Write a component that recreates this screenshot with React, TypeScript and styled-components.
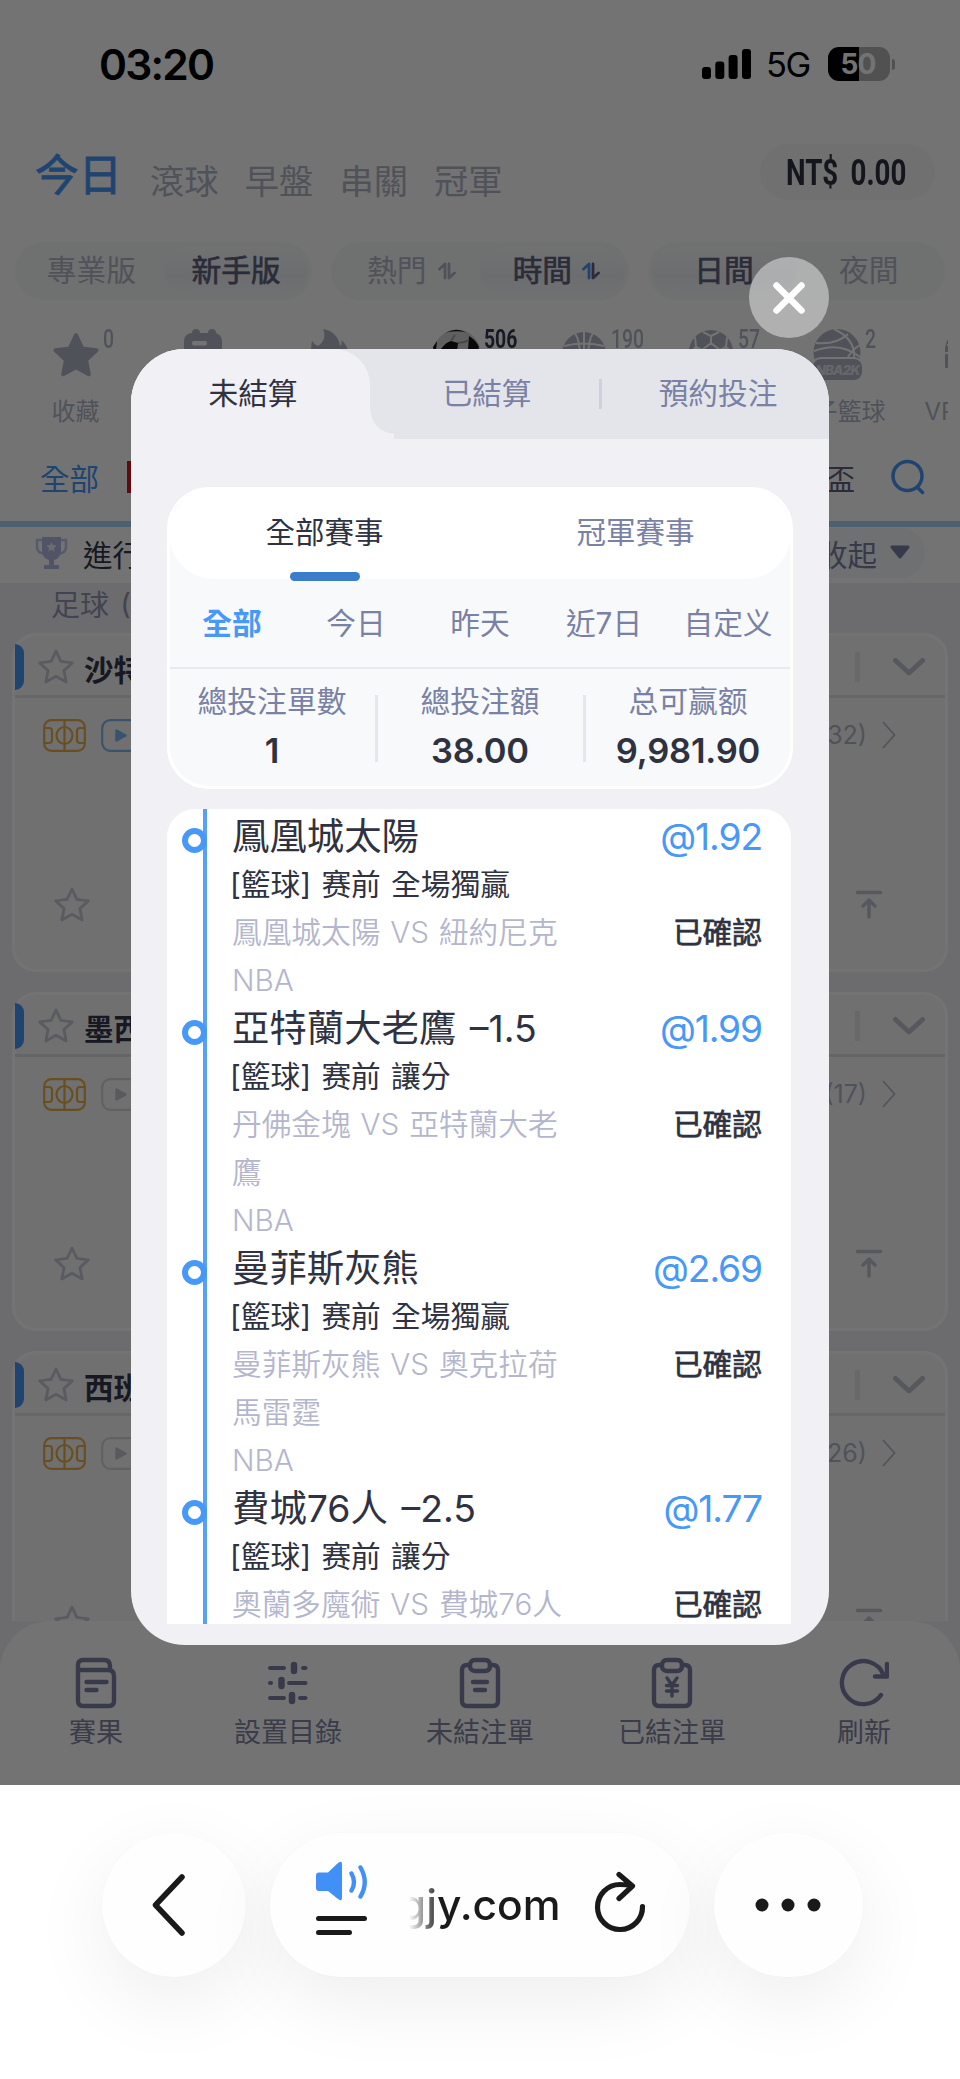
import React from "react";
import styled, { createGlobalStyle } from "styled-components";

const GlobalStyle = createGlobalStyle`
  *, *::before, *::after { box-sizing: border-box; }
  body {
    margin: 0;
    background: #fff;
    font-family: Inter, "Noto Sans CJK TC", sans-serif;
    color: #2f3241;
  }
  svg { display: block; flex: none; }
`;

const Screen = styled.div`
  width: 960px;
  height: 2079px;
  overflow: hidden;
  position: relative;
  display: flex;
  flex-direction: column;
  white-space: nowrap;
`;

const Page = styled.div`
  position: relative;
  height: 1785px;
  background: #fff;
  overflow: hidden;
  display: flex;
  flex-direction: column;
`;

const Scrim = styled.div`
  position: absolute;
  inset: 0;
  background: rgba(0, 0, 0, 0.55);
`;

/* ---------- status bar ---------- */

const StatusBar = styled.div`
  height: 128px;
  display: flex;
  align-items: center;
  padding: 0 65px 0 99px;
  color: #000;
`;

const Clock = styled.div`
  flex: 1;
  font-size: 42.5px;
  font-weight: 600;
  letter-spacing: -1.8px;
`;

const Network = styled.div`
  font-size: 34.5px;
  width: 45px;
  margin: 1px 17px 0 15px;
  letter-spacing: -1.5px;
`;

const Battery = styled.div`
  width: 62px;
  height: 34px;
  border-radius: 11px;
  display: flex;
  align-items: center;
  justify-content: center;
  font-size: 28px;
  font-weight: 700;
  color: #fff;
  letter-spacing: -0.8px;
  padding-right: 2px;
  background: linear-gradient(90deg, #000 31px, #b4b4b4 31px);
`;

const BatteryNub = styled.div`
  width: 3px;
  height: 11px;
  margin-left: 2px;
  border-radius: 0 4px 4px 0;
  background: #b4b4b4;
`;

/* ---------- header ---------- */

const NavRow = styled.div`
  height: 114px;
  display: flex;
  align-items: flex-start;
  padding: 16px 25px 0 35px;
`;

const NavTab = styled.div<{ $active?: boolean }>`
  width: ${(p) => (p.$active ? 115 : 94.7)}px;
  font-size: ${(p) => (p.$active ? 43.5 : 34.3)}px;
  -webkit-text-stroke: ${(p) => (p.$active ? "1px #4898f8" : "0")};
  color: ${(p) => (p.$active ? "#4898f8" : "#b1b7c8")};
  line-height: 60px;
  margin-top: ${(p) => (p.$active ? 1 : 8)}px;
`;

const Balance = styled.div`
  margin-left: auto;
  width: 175px;
  height: 56px;
  border-radius: 28px;
  background: #f8f8fa;
  display: flex;
  align-items: center;
  justify-content: center;
  padding: 2px 2px 0 0;
  color: #2f3241;
`;

const Condensed = styled.span<{ $size: number; $bold?: boolean }>`
  font-family: Roboto, sans-serif;
  font-size: ${(p) => p.$size}px;
  font-weight: ${(p) => (p.$bold ? 700 : 500)};
  line-height: 1;
  word-spacing: -1px;
  transform: scaleX(0.76);
  transform-origin: ${(p) => (p.$size > 30 ? "center" : "left")};
`;

const Segments = styled.div`
  height: 58px;
  display: flex;
  gap: 19px;
  padding: 0 15px;
`;

const Segment = styled.div`
  flex: 1;
  border-radius: 29px;
  background: #f7f8f9;
  padding: 5px 4px;
  display: flex;
`;

const SegItem = styled.div<{ $active?: boolean; $sortable?: boolean }>`
  flex: 1;
  display: flex;
  align-items: center;
  justify-content: center;
  gap: ${(p) => (p.$active ? 10 : 12)}px;
  padding: 0 0 6px ${(p) => (p.$sortable ? 8 : 0)}px;
  border-radius: 24px;
  font-size: 29.7px;
  -webkit-text-stroke: ${(p) => (p.$active ? "0.7px #5f6380" : "0")};
  color: ${(p) => (p.$active ? "#5f6380" : "#b1b7c8")};
  background: ${(p) =>
    p.$active ? "linear-gradient(#fbfbfc, #f5f7fa 35%, #edf1f6 60%, #f9fafb)" : "none"};

  svg {
    margin-top: 5px;
  }
`;

const SportsRow = styled.div`
  height: 136px;
  width: 936px;
  margin-left: 12px;
  padding-top: 29px;
  display: flex;
  overflow: hidden;
`;

const Sport = styled.div`
  position: relative;
  flex: none;
  width: 127px;
  display: flex;
  flex-direction: column;
  align-items: center;
  color: #b1b7c8;
`;

const SportIcon = styled.div`
  height: 55px;
  flex: none;
  display: flex;
  align-items: flex-start;
`;

const SportLabel = styled.div`
  font-size: 24px;
  line-height: 56px;
`;

const SportCount = styled.div<{ $dark?: boolean }>`
  position: absolute;
  left: 91px;
  top: -2px;
  color: ${(p) => (p.$dark ? "#333a50" : "#b1b7c8")};
`;

const LeagueRow = styled.div`
  height: 91px;
  border-bottom: 6px solid #a8d5f9;
  display: flex;
  align-items: center;
  padding: 0 35px 3px 40px;
  font-size: 29.5px;
  color: #5f6380;
`;

const LeagueAll = styled.span`
  color: #4898f8;
  width: 87px;
`;

const LeagueBadge = styled.span`
  width: 70px;
  height: 32px;
  background: #d8141f;
`;

const LeagueCup = styled.span`
  margin-left: auto;
  margin-right: 36px;
`;

const LiveRow = styled.div`
  height: 56px;
  display: flex;
  align-items: center;
  padding: 0 35px 5px;
  font-size: 29.5px;
  color: #33364a;
`;

const LiveTitle = styled.span`
  margin-left: 15px;
`;

const Collapse = styled.div`
  margin-left: auto;
  width: 134px;
  height: 50px;
  border-radius: 25px;
  background: #f7f8fa;
  display: flex;
  align-items: center;
  justify-content: flex-end;
  gap: 13px;
  padding-right: 15px;
  color: #7981a4;
`;

const Matches = styled.div`
  height: 1038px;
  overflow: hidden;
  background: #f0f0f5;
  padding: 0 12px;
`;

const SportHeading = styled.div`
  height: 50px;
  line-height: 46px;
  padding-left: 39px;
  font-size: 29px;
  word-spacing: 3px;
  color: #9297b3;
`;

const MatchCard = styled.div`
  height: 339px;
  margin-bottom: 20px;
  border: 3px solid #fff;
  border-radius: 24px;
  background: #f9f9fa;
`;

const MatchHead = styled.div<{ $line: string }>`
  height: 62px;
  border-bottom: 3px solid ${(p) => p.$line};
  display: flex;
  align-items: center;
  padding: 3px 20px 0 0;
  font-size: 29.5px;
  font-weight: 700;
  color: #33364a;
`;

const Marker = styled.span`
  width: 9px;
  height: 46px;
  margin-right: 13px;
  border-radius: 0 9px 9px 0;
  background: #4898f8;
`;

const MatchTitle = styled.span`
  margin: 2px 0 0 9px;
`;

const HeadDot = styled.span`
  width: 3px;
  height: 3px;
  margin: -22px 26px 0 auto;
  background: #b1b7c8;
`;

const HeadDivider = styled.span`
  width: 5px;
  height: 30px;
  margin-right: 31px;
  background: #e6e7ea;
`;

const MatchInfo = styled.div`
  height: 74px;
  display: flex;
  align-items: center;
  gap: 15px;
  padding: 0 49px 0 28px;
  color: #b1b7c8;
`;

const MatchCount = styled.span`
  margin-left: auto;
  font-size: 25px;
`;

const MatchFoot = styled.div`
  display: flex;
  justify-content: space-between;
  align-items: center;
  padding: 114px 62px 0 38px;
`;

const BottomNav = styled.div`
  height: 164px;
  background: #f0f0f5;
`;

const BottomNavInner = styled.div`
  height: 164px;
  border-radius: 50px 50px 0 0;
  background: #fff;
  display: flex;
  padding-top: 34px;
`;

const NavItem = styled.div`
  flex: 1;
  display: flex;
  flex-direction: column;
  align-items: center;
  gap: 3px;
  color: #8085a4;
  font-size: 27px;
  line-height: 42px;
`;

/* ---------- bet slip dialog ---------- */

const Dialog = styled.div`
  position: absolute;
  left: 131px;
  top: 349px;
  width: 698px;
  height: 1296px;
  border-radius: 54px;
  overflow: hidden;
  background: #f0f0f5;
  display: flex;
  flex-direction: column;
  padding-bottom: 21px;
`;

const DialogTabs = styled.div`
  height: 90px;
  flex: none;
  margin-bottom: 48px;
  background: #e4e5ea;
  display: grid;
  grid-template-columns: 239px 229px 3px 227px;
  align-items: center;
`;

const DialogTab = styled.div<{ $active?: boolean }>`
  position: relative;
  height: 90px;
  line-height: ${(p) => (p.$active ? 89 : 88)}px;
  text-align: center;
  font-size: 29.7px;
  padding-left: 5px;
  color: ${(p) => (p.$active ? "#2f3241" : "#7981a4")};
  background: ${(p) => (p.$active ? "#f0f0f5" : "none")};
  border-radius: ${(p) => (p.$active ? "0 36px 0 0" : "0")};

  &::after {
    content: "";
    display: ${(p) => (p.$active ? "block" : "none")};
    position: absolute;
    left: 100%;
    bottom: 0;
    width: 24px;
    height: 29px;
    border-bottom: 5px solid #f0f0f5;
    background: radial-gradient(circle at 24px 0, transparent 23px, #f0f0f5 24px);
  }
`;

const TabDivider = styled.div`
  height: 30px;
  background: #cdd0dd;
`;

const Summary = styled.div`
  flex: none;
  width: 626px;
  height: 302px;
  margin-left: 36px;
  border: 3px solid #fff;
  border-radius: 42px;
  background: #f8f9fb;
  display: flex;
  flex-direction: column;
`;

const ScopeTabs = styled.div`
  height: 91px;
  margin: -2px -1px 0;
  flex: none;
  border-radius: 46px;
  background: #fff;
  display: flex;
`;

const ScopeTab = styled.div<{ $active?: boolean }>`
  position: relative;
  flex: 1;
  text-align: center;
  line-height: 89px;
  font-size: 29.5px;
  color: ${(p) => (p.$active ? "#2f3241" : "#7981a4")};

  &::after {
    content: "";
    display: ${(p) => (p.$active ? "block" : "none")};
    position: absolute;
    left: 50%;
    bottom: -2px;
    width: 70px;
    height: 9px;
    margin-left: -35px;
    border-radius: 4.5px;
    background: #3a7dcb;
  }
`;

const Filters = styled.div`
  display: flex;
  height: 90px;
  border-bottom: 2px solid #e9eaee;
`;

const Filter = styled.div<{ $active?: boolean }>`
  flex: 1;
  text-align: center;
  line-height: 88px;
  font-size: 29.7px;
  font-weight: ${(p) => (p.$active ? 700 : 400)};
  color: ${(p) => (p.$active ? "#4898f8" : "#7981a4")};
`;

const Stats = styled.div`
  flex: 1;
  display: flex;
  margin: 0 -2px;
`;

const Stat = styled.div`
  position: relative;
  flex: 1;
  text-align: center;
  padding-top: 9px;

  & + &::before {
    content: "";
    position: absolute;
    left: -1px;
    top: 26px;
    width: 3px;
    height: 67px;
    background: #e6e7ee;
  }
`;

const StatLabel = styled.div`
  font-size: 29.8px;
  line-height: 46px;
  color: #7981a4;
`;

const StatValue = styled.div`
  font-size: 34.5px;
  font-weight: 600;
  letter-spacing: -0.2px;
  line-height: 53px;
`;

const Bets = styled.div`
  position: relative;
  flex: 1;
  width: 624px;
  margin: 20px 0 0 36px;
  padding-top: 3px;
  border-radius: 28px 28px 0 0;
  background: #fff;
  overflow: hidden;

  &::before {
    content: "";
    position: absolute;
    left: 36px;
    top: 0;
    bottom: 0;
    width: 4px;
    background: #55a0f8;
  }
`;

const Bet = styled.div`
  position: relative;
  padding: 0 29px 0 65px;

  &::before {
    content: "";
    position: absolute;
    left: 15px;
    top: 16px;
    width: 25px;
    height: 25px;
    border: 6px solid #4898f8;
    border-radius: 50%;
    background: #fff;
  }
`;

const BetLine = styled.div`
  display: flex;
  justify-content: space-between;
  font-size: 29.7px;
  line-height: 48px;
  word-spacing: 1.5px;
`;

const BetTitle = styled(BetLine)`
  font-size: 37.4px;
  line-height: 50px;
  margin-bottom: -2px;
  word-spacing: 3px;
`;

const BetMarket = styled(BetLine)`
  margin-left: -2px;
  word-spacing: 2px;
`;

const Odds = styled.span`
  color: #4898f8;
  font-size: 37.2px;
  letter-spacing: -1.1px;
`;

const Muted = styled.span`
  color: #b3b6cc;
  font-weight: 350;
  white-space: pre-line;
`;

const BetState = styled.span`
  -webkit-text-stroke: 0.7px #2f3241;
`;

const CloseButton = styled.div`
  position: absolute;
  left: 749px;
  top: 257px;
  width: 80px;
  height: 81px;
  border-radius: 50%;
  background: rgba(255, 255, 255, 0.44);
  display: flex;
  align-items: center;
  justify-content: center;
`;

/* ---------- browser toolbar ---------- */

const Browser = styled.div`
  height: 294px;
  padding: 48px 97px 0 102px;
  display: flex;
  align-items: flex-start;
  gap: 24px;
  color: #1a1a1a;
  background: #fff;
  overflow: hidden;
`;

const Bubble = styled.div<{ $width: number; $shift?: number }>`
  width: ${(p) => p.$width}px;
  height: 144px;
  flex: none;
  border-radius: 72px;
  background: #fefefe;
  box-shadow: 0 24px 80px rgba(0, 0, 0, 0.07), 0 0 2px rgba(0, 0, 0, 0.03);
  display: flex;
  align-items: center;
  justify-content: center;
  padding-right: ${(p) => p.$shift ?? 0}px;
`;

const SoundMenu = styled.div`
  margin-bottom: 12px;
`;

const Reload = styled.div`
  margin-bottom: 6px;
`;

const Address = styled.div`
  width: 152px;
  margin: 0 33px 0 41px;
  display: flex;
  justify-content: flex-end;
  overflow: hidden;
  font-size: 42.5px;
  font-weight: 500;
  letter-spacing: 0;
  line-height: 64px;
  mask-image: linear-gradient(90deg, transparent, #000 31px);
`;

/* ---------- icons ---------- */

const Star = ({ solid }: { solid?: boolean }) => (
  <svg width={solid ? 48 : 38} height={solid ? 50 : 38} viewBox={solid ? "0 -0.7 24 24" : "0 0 24 24"} fill={solid ? "#b1b7c8" : "none"} stroke={solid ? "#b1b7c8" : "#c6cad6"} strokeWidth={solid ? 2 : 1.8} strokeLinejoin="round">
    <path d="M12 1.9l3.1 6.6 7.2.9-5.3 4.9 1.4 7.1-6.4-3.5-6.4 3.5L7 14.3 1.7 9.4l7.2-.9z" />
  </svg>
);

const Calendar = () => (
  <svg width="40" height="46" viewBox="0 0 40 46" fill="#b1b7c8">
    <rect x="1" y="4" width="38" height="40" rx="8" />
    <rect x="9" y="0" width="8" height="12" rx="4" />
    <rect x="25" y="0" width="8" height="12" rx="4" />
    <rect x="9" y="12" width="15" height="4.5" rx="2" fill="#fff" />
  </svg>
);

const Flame = () => (
  <svg width="40" height="46" viewBox="0 0 40 46" fill="#b1b7c8">
    <path d="M13 0c12 2 16 10 17 17 2-2 2-4 1-6 5 4 8 10 8 16 0 11-8 18-19 18S1 38 1 27c0-6 0-11 1-15 2 2 3 4 6 5 6-4 8-10 5-17z" />
  </svg>
);

const SoccerColor = () => (
  <svg width="48" height="48" viewBox="0 0 48 48">
    <circle cx="24" cy="24" r="23.5" fill="#d4d4d4" />
    <path d="M13 3.500Q24-2 33 3.500Q24 1 13 3.500zM8 20q5-7 10-8l7 2-1 8-12 4zM36 7q7 4 10 11l-3 8-8-5zM16 34l9-4 8 7-4 9-10-2zM0 18l4-6-2 20z" fill="#141414" />
    <path d="M25 14q6 0 11-3M18 12l4-6" stroke="#999" strokeWidth="1.500" fill="none" />
  </svg>
);

const Basketball = () => (
  <svg width="46" height="46" viewBox="0 0 46 46">
    <circle cx="23" cy="25" r="22" fill="#b1b7c8" />
    <path d="M23 3v44M3 17q20-5 40 0M14 4q5 8 5 24M32 4q-5 8-5 24" stroke="#fff" strokeWidth="2" fill="none" />
  </svg>
);

const SoccerGray = () => (
  <svg width="46" height="46" viewBox="0 0 46 46">
    <circle cx="23" cy="23" r="22" fill="#b1b7c8" />
    <path d="M23 14l9 7-3 10H17l-3-10zM23 14V7l-8-4M23 7l8-4M32 21l6-3 1-10M38 18l7 6M14 21l-6-3-1-10M8 18l-7 6" stroke="#fff" strokeWidth="2" fill="none" />
  </svg>
);

const Nba2k = () => (
  <svg width="52" height="54" viewBox="0 0 52 54">
    <circle cx="25" cy="23.500" r="23.500" fill="#b1b7c8" />
    <path d="M4 14q20 2 32-9M2 22q26-10 46 6M22 0q22 10 20 30M36 28q5-8 12-12" stroke="#fff" strokeWidth="2" fill="none" />
    <rect x="0" y="29" width="51" height="23" rx="9" fill="#b1b7c8" stroke="#fff" strokeWidth="2" />
    <text x="25.500" y="46" textAnchor="middle" fontFamily="Inter, sans-serif" fontWeight="800" fontStyle="italic" fontSize="13.500" letterSpacing="-0.9" fill="#e3e5ec">NBA2K</text>
  </svg>
);

const VirtualIcon = () => (
  <svg width="44" height="48" viewBox="0 0 44 48">
    <circle cx="23" cy="21" r="21" fill="#b1b7c8" />
    <rect x="1" y="24" width="42" height="16" rx="2" fill="#b1b7c8" stroke="#fff" strokeWidth="2" />
    <path d="M4 16q8-2 8-12" stroke="#fff" strokeWidth="2" fill="none" />
  </svg>
);

const SortArrows = ({ active }: { active?: boolean }) => (
  <svg width="18" height="18" viewBox="0 0 18 18" fill="none" strokeWidth="2.800" strokeLinecap="round" strokeLinejoin="round">
    <path d="M7 16V2L1.500 7" stroke={active ? "#4898f8" : "#b1b7c8"} />
    <path d="M11 2v14l5.500-5" stroke={active ? "#5f6380" : "#b1b7c8"} />
  </svg>
);

const Search = () => (
  <svg width="34" height="36" viewBox="0 0 34 36" fill="none" stroke="#4898f8" strokeWidth="3.500" strokeLinecap="round">
    <circle cx="16.500" cy="17" r="14.500" />
    <path d="M26 28l5.500 5.500" />
  </svg>
);

const Trophy = () => (
  <svg width="33" height="34" viewBox="0 0 33 34">
    <path d="M8 4H2v7q0 6 8 7M25 4h6v7q0 6-8 7" fill="none" stroke="#c0c8ec" strokeWidth="2.500" />
    <path d="M7 1h19v13q0 8-7 10v5h5v4H9v-4h5v-5q-7-2-7-10z" fill="#b2bbe2" />
    <path d="M16.500 6l1.500 3 3.500.5-2.500 2.500.6 3.500-3.100-1.700-3.100 1.700.6-3.500L11.500 9.500 15 9z" fill="#eceffb" />
  </svg>
);

const Triangle = () => (
  <svg width="20" height="15" viewBox="0 0 20 15">
    <path d="M2 2h16l-8 10z" fill="#7981a4" stroke="#7981a4" strokeWidth="3" strokeLinejoin="round" />
  </svg>
);

const ChevronDown = () => (
  <svg width="34" height="20" viewBox="0 0 34 20" fill="none" stroke="#c0c3d0" strokeWidth="5" strokeLinecap="round" strokeLinejoin="round">
    <path d="M4.500 3.500L18 16 31.500 3.500" />
  </svg>
);

const ChevronThin = () => (
  <svg width="14" height="28" viewBox="0 0 14 28" fill="none" stroke="#b8bbc8" strokeWidth="1.800">
    <path d="M1 1l11.500 13L1 27" />
  </svg>
);

const Pitch = () => (
  <svg width="43" height="33" viewBox="0 0 43 33" fill="none" stroke="#e6b04a" strokeWidth="2.200">
    <rect x="1.200" y="1.200" width="40.600" height="30.600" rx="7" />
    <path d="M21.500 1v31M1 9h5q3 0 3 3v9q0 3-3 3H1M42 9h-5q-3 0-3 3v9q0 3 3 3h5" />
    <ellipse cx="21.500" cy="16.500" rx="8" ry="8.500" />
  </svg>
);

const Play = ({ on }: { on?: boolean }) => (
  <svg width="44" height="33" viewBox="0 0 44 33">
    <rect x="1.200" y="1.200" width="41.600" height="30.600" rx="8" fill="none" stroke={on ? "#7fb8f5" : "#d6d7dc"} strokeWidth="2.200" />
    <path d="M15.500 11.500v10l9-5z" fill={on ? "#7fb8f5" : "#c6c8ce"} stroke={on ? "#7fb8f5" : "#c6c8ce"} strokeWidth="2.500" strokeLinejoin="round" />
  </svg>
);

const ToTop = () => (
  <svg width="28" height="30" viewBox="0 0 28 30" fill="none" stroke="#c0c3d0" strokeWidth="3.500" strokeLinecap="round" strokeLinejoin="round">
    <path d="M2.500 2.500h23M14 27V10M8 16l6-6 6 6" />
  </svg>
);

const NavSvg = ({ children }: { children: React.ReactNode }) => (
  <svg width="50" height="54" viewBox="0 0 50 54" fill="none" stroke="#7c82a6" strokeWidth="4.400" strokeLinecap="round" strokeLinejoin="round">
    {children}
  </svg>
);

const ResultsIcon = () => (
  <NavSvg>
    <path d="M7 15V10q0-5 5-5h21q6 0 6 6v4M7 12v34q0 5 5 5h26q5 0 5-5V21q0-6-6-6H7M15.500 27h20M15.500 35h10" />
  </NavSvg>
);

const SlidersIcon = () => (
  <NavSvg>
    <path d="M7 13h14M40 13h2.500M7 28h1M26 28h16.500M7 43h14M37 43h5.500" strokeWidth="4" />
    <path d="M31 10v6M18.500 25v6M29 40v6" strokeWidth="6.500" />
  </NavSvg>
);

const Clipboard = ({ children }: { children: React.ReactNode }) => (
  <NavSvg>
    <path d="M15 10h-3q-5 0-5 5v31q0 5 5 5h26q5 0 5-5V15q0-5-5-5h-3" />
    <path d="M20 5h10q5 0 5 5.500T30 16H20q-5 0-5-5.500T20 5z" />
    {children}
  </NavSvg>
);

const RefreshIcon = () => (
  <NavSvg>
    <path d="M42 40A21.500 21.500 0 1 1 44.500 20M48 9v12.500H36" />
  </NavSvg>
);

const sports = [
  { icon: <Star solid />, count: "0", label: "收藏" },
  { icon: <Calendar /> },
  { icon: <Flame /> },
  { icon: <SoccerColor />, count: "506", dark: true },
  { icon: <Basketball />, count: "190" },
  { icon: <SoccerGray />, count: "57" },
  { icon: <Nba2k />, count: "2", label: "電子籃球" },
  { icon: <VirtualIcon />, label: "VR足球" },
];

const matches = [
  { title: "沙特", count: "(32)", live: true, line: "#e4e5e9" },
  { title: "墨西", count: "(17)", live: false, line: "#dde2e3" },
  { title: "西班", count: "(26)", live: false, line: "#e4e5e9" },
];

const bets = [
  { pick: "鳳凰城太陽", market: "[籃球] 赛前 全場獨贏", game: "鳳凰城太陽 VS 紐約尼克", odds: "@1.92", league: "NBA" },
  { pick: "亞特蘭大老鷹 –1.5", market: "[籃球] 赛前 讓分", game: "丹佛金塊 VS 亞特蘭大老\n鷹", odds: "@1.99", league: "NBA" },
  { pick: "曼菲斯灰熊", market: "[籃球] 赛前 全場獨贏", game: "曼菲斯灰熊 VS 奧克拉荷\n馬雷霆", odds: "@2.69", league: "NBA" },
  { pick: "費城76人 –2.5", market: "[籃球] 赛前 讓分", game: "奧蘭多魔術 VS 費城76人", odds: "@1.77" },
];

export default function App() {
  return (
    <Screen>
      <GlobalStyle />
      <Page>
        <StatusBar>
          <Clock>03:20</Clock>
          <svg width="49" height="30" viewBox="0 0 49 30">
            <rect x="0" y="18" width="9" height="12" rx="3" />
            <rect x="13.300" y="12.500" width="9" height="17.500" rx="3" />
            <rect x="26.600" y="6" width="9" height="24" rx="3" />
            <rect x="40" y="0" width="9" height="30" rx="3" />
          </svg>
          <Network>5G</Network>
          <Battery>50</Battery>
          <BatteryNub />
        </StatusBar>
        <NavRow>
          <NavTab $active>今日</NavTab>
          <NavTab>滾球</NavTab>
          <NavTab>早盤</NavTab>
          <NavTab>串關</NavTab>
          <NavTab>冠軍</NavTab>
          <Balance>
            <Condensed $size={36.5} $bold>NT$&nbsp; 0.00</Condensed>
          </Balance>
        </NavRow>
        <Segments>
          <Segment>
            <SegItem>專業版</SegItem>
            <SegItem $active>新手版</SegItem>
          </Segment>
          <Segment>
            <SegItem $sortable>熱門<SortArrows /></SegItem>
            <SegItem $sortable $active>時間<SortArrows active /></SegItem>
          </Segment>
          <Segment>
            <SegItem $active>日間</SegItem>
            <SegItem>夜間</SegItem>
          </Segment>
        </Segments>
        <SportsRow>
          {sports.map((s, i) => (
            <Sport key={i}>
              <SportIcon>{s.icon}</SportIcon>
              {s.label && <SportLabel>{s.label}</SportLabel>}
              {s.count && (
                <SportCount $dark={s.dark}>
                  <Condensed as="div" $size={25.5} $bold={s.dark}>{s.count}</Condensed>
                </SportCount>
              )}
            </Sport>
          ))}
        </SportsRow>
        <LeagueRow>
          <LeagueAll>全部</LeagueAll>
          <LeagueBadge />
          <LeagueCup>盃</LeagueCup>
          <Search />
        </LeagueRow>
        <LiveRow>
          <Trophy />
          <LiveTitle>進行中</LiveTitle>
          <Collapse>收起<Triangle /></Collapse>
        </LiveRow>
        <Matches>
          <SportHeading>足球 (45)</SportHeading>
          {matches.map((m) => (
            <MatchCard key={m.title}>
              <MatchHead $line={m.line}>
                <Marker />
                <Star />
                <MatchTitle>{m.title}</MatchTitle>
                <HeadDot />
                <HeadDivider />
                <ChevronDown />
              </MatchHead>
              <MatchInfo>
                <Pitch />
                <Play on={m.live} />
                <MatchCount>{m.count}</MatchCount>
                <ChevronThin />
              </MatchInfo>
              <MatchFoot>
                <Star />
                <ToTop />
              </MatchFoot>
            </MatchCard>
          ))}
        </Matches>
        <BottomNav>
          <BottomNavInner>
            <NavItem><ResultsIcon />賽果</NavItem>
            <NavItem><SlidersIcon />設置目錄</NavItem>
            <NavItem>
              <Clipboard><path d="M18 27h14M20 35h10" /></Clipboard>
              未結注單
            </NavItem>
            <NavItem>
              <Clipboard><path d="M20 23l5 7 5-7M25 30v11M19.500 30.500h11M19.500 36h11" strokeWidth="3.400" /></Clipboard>
              已結注單
            </NavItem>
            <NavItem><RefreshIcon />刷新</NavItem>
          </BottomNavInner>
        </BottomNav>
        <Scrim />
      </Page>

      <Dialog>
        <DialogTabs>
          <DialogTab $active>未結算</DialogTab>
          <DialogTab>已結算</DialogTab>
          <TabDivider />
          <DialogTab>預約投注</DialogTab>
        </DialogTabs>
        <Summary>
          <ScopeTabs>
            <ScopeTab $active>全部賽事</ScopeTab>
            <ScopeTab>冠軍賽事</ScopeTab>
          </ScopeTabs>
          <Filters>
            <Filter $active>全部</Filter>
            <Filter>今日</Filter>
            <Filter>昨天</Filter>
            <Filter>近7日</Filter>
            <Filter>自定义</Filter>
          </Filters>
          <Stats>
            <Stat><StatLabel>總投注單數</StatLabel><StatValue>1</StatValue></Stat>
            <Stat><StatLabel>總投注額</StatLabel><StatValue>38.00</StatValue></Stat>
            <Stat><StatLabel>总可赢额</StatLabel><StatValue>9,981.90</StatValue></Stat>
          </Stats>
        </Summary>
        <Bets>
          {bets.map((b) => (
            <Bet key={b.pick}>
              <BetTitle><span>{b.pick}</span><Odds>{b.odds}</Odds></BetTitle>
              <BetMarket>{b.market}</BetMarket>
              <BetLine><Muted>{b.game}</Muted><BetState>已確認</BetState></BetLine>
              {b.league && <BetLine><Muted>{b.league}</Muted></BetLine>}
            </Bet>
          ))}
        </Bets>
      </Dialog>
      <CloseButton>
        <svg width="36" height="36" viewBox="0 0 36 36" stroke="#fff" strokeWidth="6.500" strokeLinecap="round">
          <path d="M5.500 5.500l25 25M30.500 5.500l-25 25" />
        </svg>
      </CloseButton>

      <Browser>
        <Bubble $width={144} $shift={10}>
          <svg width="36" height="62" viewBox="0 0 36 62" fill="none" stroke="#1a1a1a" strokeWidth="5.500" strokeLinecap="round" strokeLinejoin="round">
            <path d="M31 3L4.500 31 31 59" />
          </svg>
        </Bubble>
        <Bubble $width={420}>
          <SoundMenu>
            <svg width="53" height="76" viewBox="0 0 53 76" fill="none" strokeLinecap="round">
              <path d="M4 11.500h9L23 2q4-3 4 1v34q0 4-4 1L13 30H4q-3 0-3-3V14.500q0-3 3-3z" fill="#4090f8" />
              <path d="M36.500 12.500q5 8.500 0 17M45.500 6.500q8.500 14.500 0 29" stroke="#4090f8" strokeWidth="4.400" />
              <path d="M3.500 57.500h46M3.500 71.500h31" stroke="#1a1a1a" strokeWidth="5" />
            </svg>
          </SoundMenu>
          <Address>gjy.com</Address>
          <Reload>
            <svg width="52" height="64" viewBox="0 0 52 64" fill="none" stroke="#1a1a1a" strokeWidth="5.200" strokeLinecap="round" strokeLinejoin="round">
              <path d="M48.500 36.500A22.500 22.500 0 1 1 26 14.500Q32 14.500 38 16M25 4.500L38.500 16 25 28.500" />
            </svg>
          </Reload>
        </Bubble>
        <Bubble $width={149} $shift={2}>
          <svg width="66" height="14" viewBox="0 0 66 14" fill="#1a1a1a">
            <circle cx="7" cy="7" r="6.500" />
            <circle cx="33" cy="7" r="6.500" />
            <circle cx="59" cy="7" r="6.500" />
          </svg>
        </Bubble>
      </Browser>
    </Screen>
  );
}
